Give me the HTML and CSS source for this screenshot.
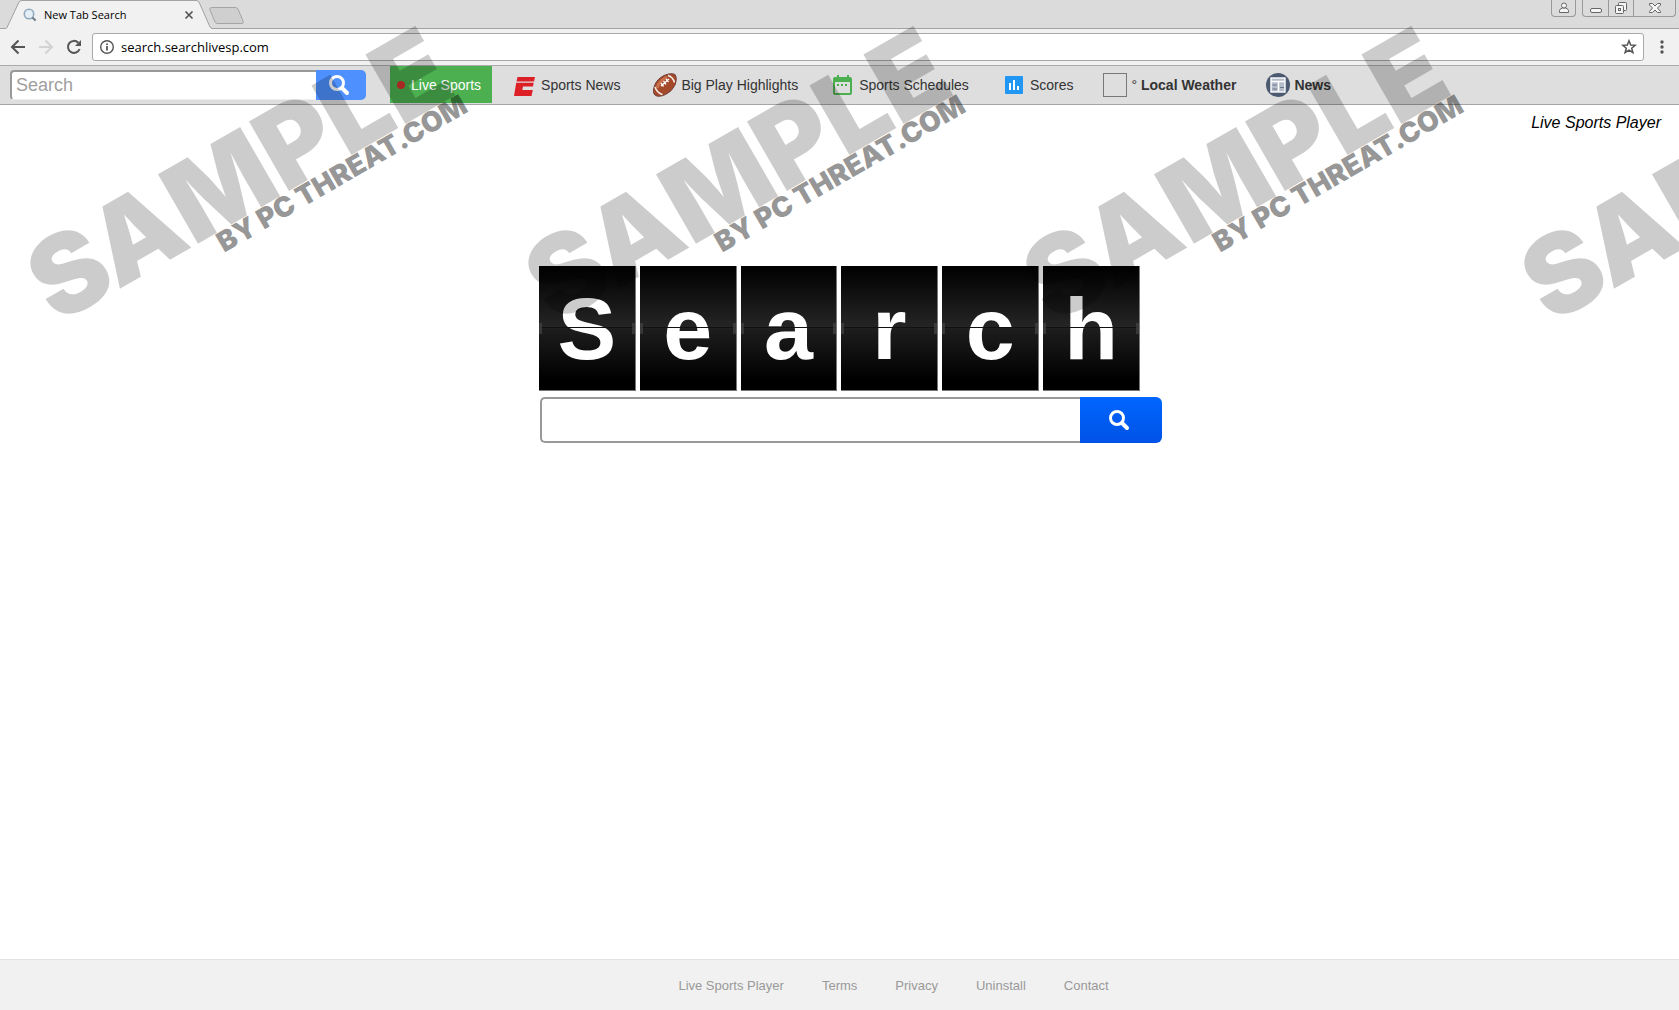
FILE: index.html
```
<!DOCTYPE html>
<html lang="en">
<head>
    <meta charset="UTF-8">
    <meta name="viewport" content="width=device-width, initial-scale=1.0">
    <title>New Tab Search</title>
    <link rel="stylesheet" href="styles.css">
</head>
<body>

<!-- Browser window -->
<header class="browser">
    <div class="tab-strip">
        <div class="tab">
            <svg class="tab-shape" width="206" height="29" viewBox="0 0 206 29" aria-hidden="true">
                <path d="M0 29L1 27.500L13 2Q14 .5 16 .5H190Q192 .5 193 2L204 27L206 29Z" fill="#f1f1f1"/>
                <path d="M0 28.500L1 27.500L13 2Q14 .5 16 .5H190Q192 .5 193 2L204 27L206 28.500" fill="none" stroke="#a2a2a2"/>
            </svg>
            <svg class="favicon" width="14" height="14" viewBox="0 0 14 14" aria-hidden="true">
                <circle cx="6" cy="6" r="4.700" fill="#e3eef7" stroke="#90a9bd" stroke-width="1.600"/>
                <path d="M9.500 9.500L12.600 12.600" stroke="#697988" stroke-width="2"/>
            </svg>
            <span class="tab-title">New Tab Search</span>
            <button class="icon-btn tab-close" aria-label="Close tab">
                <svg width="10" height="10" viewBox="0 0 10 10"><path d="M1.500 1.500L8.500 8.500M8.500 1.500L1.500 8.500" stroke="#555" stroke-width="1.700"/></svg>
            </button>
        </div>
        <button class="icon-btn new-tab" aria-label="New tab">
            <svg width="36" height="18" viewBox="0 0 36 18"><path d="M3 .5H26Q28 .5 29 2L34 14Q35 16.500 33 16.500H9Q7 16.500 6 15L1 3Q0 .5 3 .5Z" fill="#cfcfcf" stroke="#a5a5a5"/></svg>
        </button>
        <div class="window-controls">
            <button class="win-btn profile" aria-label="Profile">
                <svg width="12" height="12" viewBox="0 0 12 12" fill="#f5f5f5" stroke="#666"><path d="M1.500 10.500V8.500Q2 6.500 4.500 6H7.500Q10 6.500 10.500 8.500V10.500Z"/><circle cx="6" cy="3.500" r="2.500"/></svg>
            </button>
            <div class="win-group">
                <button class="win-btn" aria-label="Minimize">
                    <svg width="14" height="14" viewBox="0 0 14 14"><rect x="1.500" y="7.500" width="11" height="4" rx="1.500" fill="#f5f5f5" stroke="#666"/></svg>
                </button>
                <button class="win-btn" aria-label="Restore">
                    <svg width="14" height="14" viewBox="0 0 14 14" fill="#f5f5f5" stroke="#666"><rect x="4.500" y="1.500" width="8" height="8" rx="1"/><rect x="1.500" y="4.500" width="8" height="8" rx="1"/><rect x="4.500" y="7.500" width="2" height="2"/></svg>
                </button>
                <button class="win-btn win-close" aria-label="Close">
                    <svg width="14" height="14" viewBox="0 0 14 14"><path d="M1.500 2.500H4.500L7 5L9.500 2.500H12.500V4L9.500 7L12.500 10.500V11.500H9.500L7 9L4.500 11.500H1.500V10.500L4.500 7L1.500 4Z" fill="#f5f5f5" stroke="#666"/></svg>
                </button>
            </div>
        </div>
    </div>

    <div class="toolbar">
        <button class="icon-btn" aria-label="Back">
            <svg width="16" height="16" viewBox="0 0 16 16"><path d="M15 8H2.500M8.500 1.500L2 8L8.500 14.500" fill="none" stroke="#555" stroke-width="2"/></svg>
        </button>
        <button class="icon-btn" aria-label="Forward" disabled>
            <svg width="16" height="16" viewBox="0 0 16 16"><path d="M1 8H13.500M7.500 1.500L14 8L7.500 14.500" fill="none" stroke="#d3d3d3" stroke-width="2"/></svg>
        </button>
        <button class="icon-btn" aria-label="Reload">
            <svg width="16" height="16" viewBox="0 0 16 16"><path d="M13.600 10A6 6 0 1 1 12.300 3.700" fill="none" stroke="#555" stroke-width="2"/><path d="M15 1V7H9Z" fill="#555"/></svg>
        </button>
        <div class="address">
            <svg width="16" height="16" viewBox="0 0 16 16" aria-hidden="true"><circle cx="8" cy="8" r="6.300" fill="none" stroke="#555" stroke-width="1.400"/><path d="M8 7V11.500M8 4.500V6" stroke="#555" stroke-width="1.800"/></svg>
            <input type="text" class="address-input" aria-label="Address" value="search.searchlivesp.com">
            <button class="icon-btn" aria-label="Bookmark this page">
                <svg width="16" height="16" viewBox="0 0 16 16"><path d="M8 1.800L9.700 6L14.200 6.300L10.700 9.200L11.900 13.700L8 11.200L4.100 13.700L5.300 9.200L1.800 6.300L6.300 6Z" fill="none" stroke="#555" stroke-width="1.500"/></svg>
            </button>
        </div>
        <button class="icon-btn" aria-label="Menu">
            <svg width="16" height="16" viewBox="0 0 16 16" fill="#555"><circle cx="8" cy="3" r="1.700"/><circle cx="8" cy="8" r="1.700"/><circle cx="8" cy="13" r="1.700"/></svg>
        </button>
    </div>
</header>

<!-- Sports bar -->
<nav class="sports-bar">
    <form class="bar-search">
        <input type="text" class="bar-input" placeholder="Search" aria-label="Search">
        <button type="submit" class="bar-submit" aria-label="Search">
            <svg width="22" height="22" viewBox="0 0 22 22"><circle cx="9" cy="9" r="6.500" fill="none" stroke="#fff" stroke-width="3"/><path d="M14 14L19 19" stroke="#fff" stroke-width="4" stroke-linecap="round"/></svg>
        </button>
    </form>
    <a class="live" href="#"><span class="dot"></span>Live Sports</a>
    <a class="link" href="#">
        <svg width="24" height="24" viewBox="0 0 24 24" fill="#dd1f26"><path d="M4.500 4H22L21 8.500H3.500Z"/><path d="M3.200 9.800H20.700L20 13.500H10L9.300 17H19.800L18.500 23H1Z"/></svg>
        Sports News
    </a>
    <a class="link" href="#">
        <svg width="24" height="24" viewBox="0 0 24 24">
            <path d="M2.500 22.500Q-1 20 1.500 12.500Q4 6 11 2.500Q18 -.5 22 1.500Q24.500 5 22 12Q19 18.500 12.500 21.500Q6 24.500 2.500 22.500Z" fill="#a4492a" stroke="#6d4038"/>
            <path d="M4 15Q6 8 14 4" fill="none" stroke="#c9714c" stroke-width="3"/>
            <path d="M15 2.500Q20 4 21.500 9.500M2 14Q4 20 9.500 21.500" fill="none" stroke="#f6eee8" stroke-width="1.500"/>
            <path d="M8 13L16 6M8 10L10.500 13.500M10.500 8L13 11.500M13 6L15.500 9" stroke="#fff" stroke-width="1.300"/>
        </svg>
        Big Play Highlights
    </a>
    <a class="link" href="#">
        <svg width="24" height="24" viewBox="0 0 24 24" fill="#4caf50"><path d="M4 4H6V2H8V4H16V2H18V4H19Q21 4 21 6V20Q21 22 19 22H4Q2 22 2 20V6Q2 4 4 4ZM4 9V20H19V9Z" fill-rule="evenodd"/><path d="M6 11H8V13H6ZM10 11H12V13H10ZM14 11H16V13H14Z"/></svg>
        Sports Schedules
    </a>
    <a class="link" href="#">
        <svg width="24" height="24" viewBox="0 0 24 24"><rect x="3" y="3" width="18" height="18" rx="1" fill="#2196f3"/><path d="M8 10V17M12 7V17M16 13V17" stroke="#fff" stroke-width="2"/></svg>
        Scores
    </a>
    <a class="link strong" href="#"><span class="weather-box"></span><span><span class="degree">°</span> Local Weather</span></a>
    <a class="link strong" href="#">
        <svg width="24" height="24" viewBox="0 0 24 24"><circle cx="12" cy="12" r="12" fill="#4b5a70"/><rect x="5" y="5" width="14" height="14" fill="#b5bdca" stroke="#fff" stroke-width="1.400"/><path d="M5 8.500H19M12.500 9V18.500" stroke="#fff" stroke-width="1.500"/><path d="M6.500 12H11M6.500 16H11M14 14.500H18" stroke="#66758c"/></svg>
        News
    </a>
</nav>

<!-- Search page -->
<main class="page">
    <a class="brand" href="#">Live Sports Player</a>
    <div class="search-box">
        <h1 class="flip-board" aria-label="Search">
            <span class="flip">S</span>
            <span class="flip">e</span>
            <span class="flip">a</span>
            <span class="flip">r</span>
            <span class="flip">c</span>
            <span class="flip">h</span>
        </h1>
        <form class="main-search">
            <input type="text" class="main-input" aria-label="Search the web">
            <button type="submit" class="main-submit" aria-label="Search">
                <svg width="22" height="22" viewBox="0 0 22 22"><circle cx="9" cy="9" r="6.500" fill="none" stroke="#fff" stroke-width="3"/><path d="M14 14L19 19" stroke="#fff" stroke-width="4" stroke-linecap="round"/></svg>
            </button>
        </form>
    </div>
</main>

<footer class="footer">
    <a href="#">Live Sports Player</a>
    <a href="#">Terms</a>
    <a href="#">Privacy</a>
    <a href="#">Uninstall</a>
    <a href="#">Contact</a>
</footer>

<!-- Watermark repeated across the top of the window -->
<div class="watermark" aria-hidden="true">
    <svg class="stamp" viewBox="0 0 498 400">
        <text class="stamp-big" transform="translate(57 325) rotate(-30)">SAMPLE</text>
        <text class="stamp-small" transform="translate(224 253) rotate(-30)">BY PC THREAT.COM</text>
    </svg>
    <svg class="stamp" viewBox="0 0 498 400">
        <text class="stamp-big" transform="translate(57 325) rotate(-30)">SAMPLE</text>
        <text class="stamp-small" transform="translate(224 253) rotate(-30)">BY PC THREAT.COM</text>
    </svg>
    <svg class="stamp" viewBox="0 0 498 400">
        <text class="stamp-big" transform="translate(57 325) rotate(-30)">SAMPLE</text>
        <text class="stamp-small" transform="translate(224 253) rotate(-30)">BY PC THREAT.COM</text>
    </svg>
    <svg class="stamp" viewBox="0 0 498 400">
        <text class="stamp-big" transform="translate(57 325) rotate(-30)">SAMPLE</text>
    </svg>
</div>

</body>
</html>
```
FILE: styles.css
```
* {
    box-sizing: border-box;
}

body {
    margin: 0;
    min-height: 100vh;
    display: flex;
    flex-direction: column;
    position: relative;
    background: #fff;
    color: #333;
    font-family: "Liberation Sans", Arial, sans-serif;
    font-size: 14px;
}

a {
    color: inherit;
    text-decoration: none;
}

svg {
    display: block;
    flex: none;
}

button, input {
    font-family: inherit;
    margin: 0;
}

.icon-btn {
    display: flex;
    padding: 0;
    border: 0;
    background: none;
}

/* Browser window */
.tab-strip {
    display: flex;
    height: 29px;
    padding-left: 6px;
    background: linear-gradient(#dbdbdb 28px, #a2a2a2 28px);
}

.tab {
    position: relative;
    display: flex;
    align-items: center;
    width: 203px;
    padding: 0 15px 0 17px;
}

.tab-shape {
    position: absolute;
    left: 0;
    top: 0;
}

.favicon, .tab-title, .tab-close {
    position: relative;
}

.tab-title {
    flex: 1;
    margin-left: 7px;
    color: #000;
    font-family: "Open Sans", sans-serif;
    font-size: 11px;
    white-space: nowrap;
}

.new-tab {
    align-self: flex-start;
    margin-top: 7px;
}

.window-controls {
    display: flex;
    align-items: flex-start;
    gap: 6px;
    margin-left: auto;
    padding-right: 3px;
}

.win-group {
    display: flex;
    border: 1px solid #999;
    border-top: 0;
    border-radius: 0 0 4px 4px;
}

.win-btn {
    display: flex;
    align-items: center;
    justify-content: center;
    width: 25px;
    height: 16px;
    padding: 0;
    border: 0;
    background: none;
}

.win-btn + .win-btn {
    border-left: 1px solid #999;
}

.profile {
    height: 17px;
    border: 1px solid #999;
    border-top: 0;
    border-radius: 0 0 4px 4px;
}

.win-close {
    width: 42px;
}

.toolbar {
    display: flex;
    align-items: center;
    gap: 12px;
    padding: 4px 9px 4px 10px;
    background: #f1f1f1;
    border-bottom: 1px solid #ababab;
}

.address {
    flex: 1;
    display: flex;
    align-items: center;
    gap: 6px;
    margin-right: -2px;
    margin-left: -2px;
    height: 28px;
    padding: 0 6px;
    background: #fff;
    border: 1px solid #a8a8a8;
    border-radius: 3px;
}

.address-input {
    flex: 1;
    padding: 0;
    border: 0;
    outline: 0;
    background: none;
    color: #000;
    font-family: "Open Sans", sans-serif;
    font-size: 13px;
}

/* Sports bar */
.sports-bar {
    display: flex;
    align-items: center;
    height: 39px;
    padding-left: 10px;
    background: #dedede;
    border-bottom: 1px solid #a5a5a5;
    white-space: nowrap;
}

.bar-search {
    display: flex;
    height: 30px;
    margin-right: 24px;
}

.bar-input {
    width: 306px;
    padding: 0 4px;
    border: 2px solid #999;
    border-right: 0;
    border-bottom: 1px solid #eee;
    border-radius: 4px 0 0 4px;
    background: #fff;
    font-size: 18px;
}

.bar-input::placeholder {
    color: #a0a0a0;
}

.bar-submit {
    display: flex;
    align-items: center;
    width: 50px;
    padding: 0 0 0 12px;
    border: 0;
    border-radius: 0 5px 5px 0;
    background: #4d90fe;
}

.live {
    display: flex;
    align-items: center;
    gap: 6px;
    height: 37px;
    align-self: flex-start;
    padding: 0 11px 0 7px;
    margin-right: -12px;
    background: #4caf50;
    color: #fff;
}

.dot {
    width: 8px;
    height: 8px;
    border-radius: 50%;
    background: #d0342c;
}

.link {
    display: flex;
    align-items: center;
    gap: 4px;
    margin-left: 33px;
}

.strong {
    margin-left: 30px;
    font-weight: bold;
}

.degree {
    font-weight: normal;
}

.weather-box {
    width: 24px;
    height: 24px;
    border: 1px solid #777;
}

/* Search page */
.page {
    flex: 1;
    display: flex;
    flex-direction: column;
}

.brand {
    align-self: flex-end;
    padding: 8px 18px 0 0;
    color: #000;
    font-size: 16px;
    font-style: italic;
    line-height: 20px;
}

.search-box {
    width: 601px;
    margin: 133px auto 0;
}

.flip-board {
    display: flex;
    gap: 4px;
    margin: 0 0 6px;
}

.flip {
    position: relative;
    flex: 1;
    height: 125px;
    border-right: 1px solid #777;
    border-bottom: 1px solid #777;
    background: linear-gradient(#000, #252525 49%, #1d1d1d 51%, #000 92%);
    color: #fff;
    font-size: 88px;
    line-height: 126px;
    text-align: center;
}

/* Split line with a hinge on both ends */
.flip::before {
    content: "";
    position: absolute;
    left: 0;
    right: 0;
    top: 61px;
    height: 1px;
    background: #111;
}

.flip::after {
    content: "";
    position: absolute;
    left: 0;
    right: 0;
    top: 57px;
    height: 11px;
    border: solid #444;
    border-width: 0 3px;
    opacity: 0.7;
}

.main-search {
    display: flex;
    width: 623px;
    height: 46px;
    padding-left: 1px;
}

.main-input {
    flex: 1;
    min-width: 0;
    padding: 0 12px;
    border: 2px solid #999;
    border-right: 0;
    border-radius: 5px 0 0 5px;
    font-size: 18px;
}

.main-submit {
    display: flex;
    align-items: center;
    width: 82px;
    padding: 0 0 0 28px;
    border: 0;
    border-radius: 0 6px 6px 0;
    background: linear-gradient(#0066ff, #0052e6);
}

.footer {
    display: flex;
    align-items: center;
    justify-content: center;
    gap: 38px;
    height: 51px;
    padding-left: 108px;
    background: #f1f1f1;
    border-top: 1px solid #e2e2e2;
    color: #999;
    font-size: 13px;
}

/* Watermark */
.watermark {
    position: absolute;
    left: 0;
    top: 0;
    width: 100%;
    display: flex;
    overflow: hidden;
    pointer-events: none;
}

.stamp {
    width: 498px;
    overflow: visible;
}

.stamp-big, .stamp-small {
    font-family: Inter, "Liberation Sans", sans-serif;
    font-weight: 900;
}

.stamp-big {
    font-size: 110px;
    fill: rgba(0, 0, 0, 0.2);
}

.stamp-small {
    font-size: 28px;
    fill: rgba(0, 0, 0, 0.42);
}
```
